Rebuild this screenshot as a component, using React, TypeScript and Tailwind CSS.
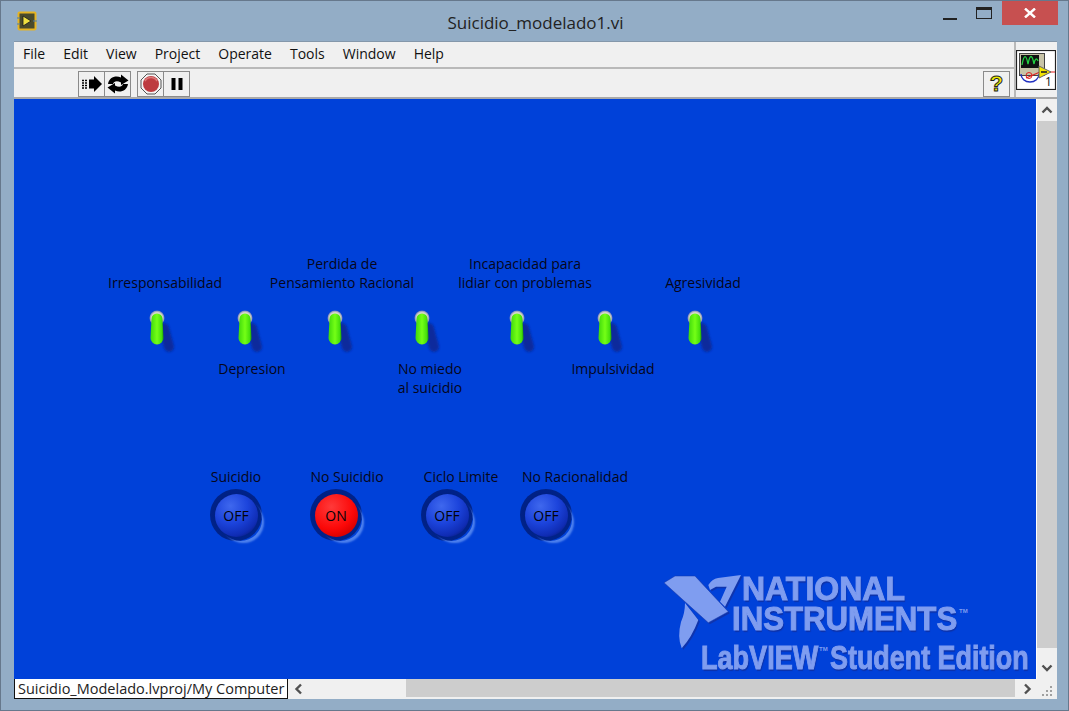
import React from 'react';

const uiFont = 'font-["Open_Sans","Noto_Sans",sans-serif]';

// front panel contents, placed on the panel's free canvas
const labels = [
  { x: 151, y: 174, w: 160, lines: ['Irresponsabilidad'] },
  { x: 238, y: 260, w: 100, lines: ['Depresion'] },
  { x: 328, y: 155, w: 180, lines: ['Perdida de', 'Pensamiento Racional'] },
  { x: 416, y: 260, w: 100, lines: ['No miedo', 'al suicidio'] },
  { x: 511, y: 155, w: 180, lines: ['Incapacidad para', 'lidiar con problemas'] },
  { x: 599, y: 260, w: 120, lines: ['Impulsividad'] },
  { x: 689, y: 174, w: 120, lines: ['Agresividad'] },
  { x: 222, y: 368, w: 100, lines: ['Suicidio'] },
  { x: 333, y: 368, w: 120, lines: ['No Suicidio'] },
  { x: 447, y: 368, w: 120, lines: ['Ciclo Limite'] },
  { x: 561, y: 368, w: 140, lines: ['No Racionalidad'] },
];

const toggles = [143, 231, 321, 408, 503, 591, 681];

const leds = [
  { x: 222, on: false },
  { x: 322, on: true },
  { x: 433, on: false },
  { x: 532, on: false },
];

const markBand = 'M10 15.7 L21 9 L41 9 L74.3 44.7 L54.3 55.7 L31 34.7 Z';
const markTail = 'M31 36 L44.3 53 Q38 70 27.7 81.3 Q23 70 27 55 Q31 46 31 36 Z';
const markSeven = 'M54.3 18 Q58 12 64 11 L87 8 L71 39.7 L66 34.7 L72.7 19.7 L62 19.7 L56 23 Z';

function Toggle({ x }: { x: number }) {
  return (
    <svg className="absolute top-[209px]" style={{ left: x - 14 }} width="40" height="52" viewBox="0 0 40 52">
      <defs>
        <radialGradient id="tgBase" cx="0.5" cy="0.5" r="0.5">
          <stop offset="0" stopColor="#f2f2f2" />
          <stop offset="0.75" stopColor="#d2d2c8" />
          <stop offset="1" stopColor="#6f7fb8" />
        </radialGradient>
        <linearGradient id="tgLever" x1="0" x2="1" y1="0" y2="0">
          <stop offset="0" stopColor="#3ed80c" />
          <stop offset="0.5" stopColor="#74ff16" />
          <stop offset="0.85" stopColor="#46e00c" />
          <stop offset="1" stopColor="#1c9a08" />
        </linearGradient>
        <filter id="tgBlur" filterUnits="userSpaceOnUse" x="0" y="0" width="40" height="52">
          <feGaussianBlur stdDeviation="1.2" />
        </filter>
      </defs>
      <path d="M21 20 L26 39" stroke="#0a2a9c" strokeWidth="10" strokeLinecap="round" filter="url(#tgBlur)" />
      <circle cx="14" cy="10" r="7.5" fill="url(#tgBase)" />
      <path d="M8.5 11 a5.5 5.5 0 0 1 11 0 L20.5 30 a6.5 6.5 0 0 1 -13 0 Z" fill="url(#tgLever)" />
    </svg>
  );
}

function Led({ x, on }: { x: number; on: boolean }) {
  const fill = on
    ? 'bg-[radial-gradient(circle_at_38%_30%,#ff3a3a_0%,#fb0808_55%,#d80000_78%,#4d0018_100%)]'
    : 'bg-[radial-gradient(circle_at_36%_28%,#3f68ee_0%,#1c44dc_42%,#0f2cb4_72%,#020a44_100%)]';
  return (
    <div
      className="absolute top-[390px] w-[52px] h-[52px] rounded-full flex items-center justify-center bg-[radial-gradient(circle_at_45%_45%,#001a78_0%,#00248c_76%,#0036b8_88%,#0041d9_98%)]"
      style={{ left: x - 26 }}
    >
      <div className="absolute left-[9px] top-[9px] w-[43px] h-[43px] rounded-full shadow-[3px_3px_2px_-1px_#4f82ee]" />
      <div className={`relative w-[43px] h-[43px] rounded-full flex items-center justify-center ${fill} text-[14px] text-[#020208]`}>
        {on ? 'ON' : 'OFF'}
      </div>
    </div>
  );
}

function NiLogo() {
  const text = 'text-[#7f9df0] [-webkit-text-stroke:1px_#7f9df0] [text-shadow:1px_2px_1px_#0d32a8] font-bold font-["Liberation_Sans",sans-serif] whitespace-nowrap absolute origin-left leading-[28px] text-[33px]';
  const tm = 'text-[#7f9df0] font-bold font-["Liberation_Sans",sans-serif] whitespace-nowrap absolute text-[6px] leading-[7px]';
  return (
    <div className="absolute left-[640px] top-[468px] w-[380px] h-[112px]">
      <svg className="absolute left-0 top-0" width="100" height="90" viewBox="0 0 100 90">
        <g fill="#0f34ad" transform="translate(1.5 1.5)">
          <path d={markBand} />
          <path d={markTail} />
          <path d={markSeven} />
        </g>
        <path d={markTail} fill="#7f9df0" />
        <path d={markSeven} fill="#7f9df0" />
        <path d={markBand} fill="#7f9df0" stroke="#0f34ad" strokeWidth="0.5" />
      </svg>
      <div className={`${text} left-[88px] top-[8px] scale-x-[0.97]`}>NATIONAL</div>
      <div className={`${text} left-[78px] top-[38px] scale-x-[0.945]`}>INSTRUMENTS</div>
      <div className={`${tm} left-[305px] top-[41px]`}>TM</div>
      <div className={`${text} left-[47px] top-[77px] scale-x-[0.82]`}>LabVIEW</div>
      <div className={`${tm} left-[165px] top-[79px]`}>TM</div>
      <div className={`${text} left-[176px] top-[77px] scale-x-[0.815]`}>Student Edition</div>
    </div>
  );
}

function ToolButton({ children, first }: { children: React.ReactNode; first?: boolean }) {
  return (
    <div className={`w-[27px] h-[26px] flex items-center justify-center border border-[#8a8a8a] ${first ? '' : '-ml-px'}`}>
      {children}
    </div>
  );
}

function Chevron({ d }: { d: string }) {
  return (
    <svg width="12" height="12" viewBox="0 0 12 12">
      <path d={d} fill="none" stroke="#505050" strokeWidth="2.4" />
    </svg>
  );
}

export default function App() {
  return (
    <div className={`w-[1069px] h-[711px] flex flex-col bg-[#93adc6] border border-[#66788c] overflow-hidden ${uiFont}`}>
      {/* title bar */}
      <div className="h-[40px] shrink-0 flex">
        <div className="w-[40px] pl-[16px] pt-[10px]">
          <svg width="20" height="20" viewBox="0 0 20 20">
            <rect x="1.5" y="1.5" width="17" height="17" rx="1" fill="#4a4a2c" stroke="#e6b422" strokeWidth="2" />
            <path d="M6 5 L14 10 L6 15 Z" fill="#f0e040" stroke="#1a1a1a" strokeWidth="0.8" />
            <path d="M0 7 H3 M0 13 H3 M16 10 H20" stroke="#4f7fa8" strokeWidth="1" />
          </svg>
        </div>
        <div className="flex-1 text-center text-[17px] leading-[20px] pt-[12px] pl-[87px] text-[#222]">Suicidio_modelado1.vi</div>
        <div className="flex items-start pr-[10px]">
          <div className="w-[14px] h-[2px] bg-[#222] mt-[17px]" />
          <div className="w-[16px] h-[12px] border border-[#222] border-t-[3px] mt-[6px] ml-[19px]" />
          <div className="w-[56px] h-[24px] bg-[#c75050] ml-[10px] flex items-center justify-center">
            <svg width="12" height="10" viewBox="0 0 12 10">
              <path d="M1 0.5 L11 9.5 M11 0.5 L1 9.5" stroke="#fff" strokeWidth="2.4" />
            </svg>
          </div>
        </div>
      </div>

      {/* client area */}
      <div className="flex-1 flex flex-col pl-[13px] pr-[11px]">
        <div className="h-[56px] flex bg-[#f0f0f0] border-t border-[#8497aa]">
          <div className="flex-1 flex flex-col">
            <div className="h-[27px] flex items-center gap-[18px] pl-[9px] pb-[2px] text-[14px] text-[#111] border-b-2 border-[#b9b9b9]">
              <span>File</span>
              <span>Edit</span>
              <span>View</span>
              <span>Project</span>
              <span>Operate</span>
              <span>Tools</span>
              <span>Window</span>
              <span>Help</span>
            </div>
            <div className="flex-1 flex items-center pt-[1px] pl-[64px] pr-[4px]">
              <ToolButton first>
                <svg width="22" height="18" viewBox="0 0 22 18">
                  <path d="M8 4.5 H13 V1 L21 9 L13 17 V13.5 H8 Z" fill="#000" />
                  <path d="M1 5.5 H7 M1 8 H7 M1 10.5 H7 M1 13 H7" stroke="#000" strokeWidth="1.3" strokeDasharray="2 1" />
                </svg>
              </ToolButton>
              <ToolButton>
                <svg width="22" height="20" viewBox="0 0 22 20">
                  <path d="M1 10 C2 3 9 1 14 3.5 V0.5 L21.5 6.5 L14 11 V8.5 C10 6.5 7 7 6 10 Z" fill="#000" />
                  <path d="M21 10 C20 17 13 19 8 16.5 V19.5 L0.5 13.5 L8 9 V11.5 C12 13.5 15 13 16 10 Z" fill="#000" />
                </svg>
              </ToolButton>
              <div className="w-[6px]" />
              <ToolButton first>
                <svg width="22" height="22" viewBox="0 0 22 22">
                  <path d="M7 1 H15 L21 7 V15 L15 21 H7 L1 15 V7 Z" fill="#f4f4f4" stroke="#555" strokeWidth="1" />
                  <circle cx="11" cy="11" r="8" fill="#bd3b40" />
                  <path d="M5 8 a7 7 0 0 1 12 0" fill="none" stroke="#d77" strokeWidth="1.5" />
                </svg>
              </ToolButton>
              <ToolButton>
                <svg width="14" height="14" viewBox="0 0 14 14">
                  <rect x="1.5" y="1" width="4" height="12" fill="#000" />
                  <rect x="8.5" y="1" width="4" height="12" fill="#000" />
                </svg>
              </ToolButton>
              <div className="flex-1" />
              <ToolButton first>
                <span className="text-[22px] leading-none font-bold text-[#f2ee00] [-webkit-text-stroke:1px_#222] font-['Liberation_Sans',sans-serif]">?</span>
              </ToolButton>
            </div>
          </div>
          <div className="w-[43px] border-l-2 border-[#b9b9b9] pt-[8px]">
            <svg width="40" height="40" viewBox="0 0 40 40">
              <rect x="0.5" y="0.5" width="39" height="39" fill="#fff" stroke="#222" strokeWidth="1.2" />
              <rect x="3.5" y="3.5" width="25" height="22" fill="#c8c4a8" stroke="#444" />
              <rect x="5" y="5" width="18" height="13" fill="#111" />
              <path d="M6 15 C8 4 10 4 12 14 C14 4 16 4 18 14 C19 8 21 8 22 11" fill="none" stroke="#22d040" strokeWidth="1.3" />
              <path d="M5 24 a9 8 0 0 0 18 0" fill="none" stroke="#2030c0" strokeWidth="1.4" />
              <path d="M10 28 L24 22 M34 22 H39" stroke="#e02020" strokeWidth="1.2" />
              <circle cx="13" cy="25.5" r="3" fill="none" stroke="#e02020" />
              <path d="M23 16 L35 22 L23 28 Z" fill="#f2e400" stroke="#666" />
              <path d="M25 22 H31" stroke="#222" strokeWidth="1.6" />
              <text x="29" y="36" fontSize="12" fill="#111">1</text>
            </svg>
          </div>
        </div>

        <div className="h-[582px] flex border-t-2 border-[#a9a9a9]">
          {/* front panel */}
          <div className="flex-1 relative bg-[#0041d9] text-[14px] leading-[19px] text-[#06061a] overflow-hidden">
            {labels.map((l) => (
              <div key={l.lines[0]} className="absolute text-center whitespace-nowrap" style={{ left: l.x - l.w / 2, top: l.y, width: l.w }}>
                {l.lines.map((t) => (
                  <div key={t}>{t}</div>
                ))}
              </div>
            ))}
            {toggles.map((x) => (
              <Toggle key={x} x={x} />
            ))}
            {leds.map((l) => (
              <Led key={l.x} x={l.x} on={l.on} />
            ))}
            <NiLogo />
          </div>
          {/* vertical scrollbar */}
          <div className="w-[21px] flex flex-col bg-[#f0f0f0] border-l border-white">
            <div className="h-[22px] flex items-center justify-center">
              <Chevron d="M1.5 8.5 L6 4 L10.5 8.5" />
            </div>
            <div className="flex-1 bg-[#cdcdcd]" />
            <div className="h-[31px] flex justify-center pt-[14px]">
              <Chevron d="M1.5 3.5 L6 8 L10.5 3.5" />
            </div>
          </div>
        </div>

        {/* status and horizontal scrollbar */}
        <div className="h-[20px] flex bg-[#f0f0f0]">
          <div className="w-[274px] h-[21px] -mt-px bg-white border border-[#111] text-[14.5px] leading-[19px] pl-[3px] text-[#222] whitespace-nowrap overflow-hidden">
            Suicidio_Modelado.lvproj/My Computer
          </div>
          <div className="w-[118px] flex items-center pl-[5px]">
            <Chevron d="M8 1.5 L3.5 6 L8 10.5" />
          </div>
          <div className="w-[609px] h-[18px] bg-[#cdcdcd]" />
          <div className="flex-1 flex items-center pl-[6px]">
            <Chevron d="M4 1.5 L8.5 6 L4 10.5" />
            <svg className="ml-[9px] mt-[4px]" width="12" height="12" viewBox="0 0 12 12" fill="#a0a0a0">
              <rect x="8" y="1" width="2" height="2" />
              <rect x="4" y="5" width="2" height="2" />
              <rect x="8" y="5" width="2" height="2" />
              <rect x="0" y="9" width="2" height="2" />
              <rect x="4" y="9" width="2" height="2" />
              <rect x="8" y="9" width="2" height="2" />
            </svg>
          </div>
        </div>
      </div>
    </div>
  );
}
